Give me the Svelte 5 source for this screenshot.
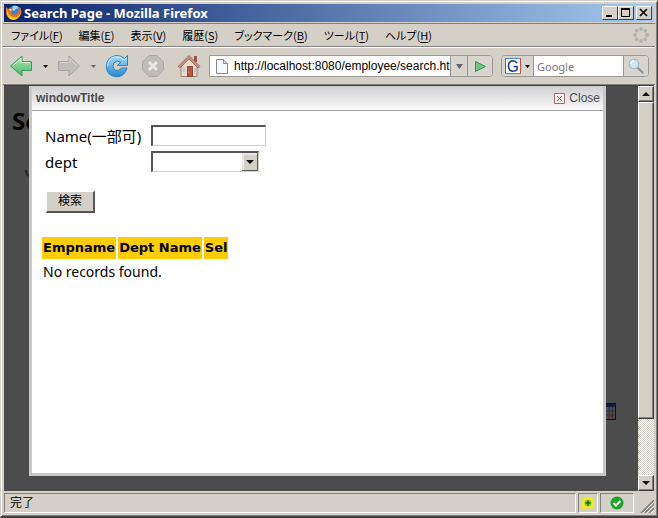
<script>
  const menus = [
    ['ファイル', 'F'],
    ['編集', 'E'],
    ['表示', 'V'],
    ['履歴', 'S'],
    ['ブックマーク', 'B'],
    ['ツール', 'T'],
    ['ヘルプ', 'H']
  ];
  const columns = ['Empname', 'Dept Name', 'Sel'];
  const dots = [0, 45, 90, 135, 180, 225, 270, 315];
  let url = $state('http://localhost:8080/employee/search.ht');
  let query = $state('');
  let name = $state('');
</script>

<div class="window">
  <header class="titlebar">
    <svg class="fox" width="18" height="18" viewBox="0 0 18 18" aria-hidden="true">
      <circle cx="9.5" cy="8" r="6.5" fill="#3a7fd0" />
      <path d="M8 2q4-1 6 2l-3 1-2 2-2-1z" fill="#9fd4f5" />
      <path d="M1 3l2 2 3-1 2 2-2 2 1 2 3 1 3-2 1-4 1-2q3 5 0 9-4 5-9 3-5-2-5-7z" fill="#e8751a" />
      <path d="M2 5q1 7 6 8 5 1 8-4-2 6-7 7-6 0-7-6z" fill="#f9c51f" />
      <path d="M4 5l2 0 1 1-2 1z" fill="#ffe08a" />
    </svg>
    <h1>Search Page - Mozilla Firefox</h1>
    <div class="winbtns">
      <button class="cap" aria-label="Minimize"><svg width="14" height="12"><path d="M3 8h6v2H3z" /></svg></button>
      <button class="cap" aria-label="Maximize"><svg width="14" height="12"><path d="M2 1h9v9H2zM3 3v6h7V3z" fill-rule="evenodd" /></svg></button>
      <button class="cap close" aria-label="Close window"><svg width="14" height="12"><path d="M3 2l7 7M10 2l-7 7" stroke="#000" stroke-width="1.7" /></svg></button>
    </div>
  </header>

  <nav class="menubar">
    {#each menus as [label, key]}
      <button>{label}(<u>{key}</u>)</button>
    {/each}
    <svg class="throbber" width="18" height="18" viewBox="-9 -9 18 18" aria-hidden="true">
      {#each dots as a}
        <circle cx="0" cy="-6" r="1.9" fill="#b4b2ad" transform={`rotate(${a})`} />
      {/each}
    </svg>
  </nav>

  <div class="toolbar">
    <button class="tool back" aria-label="Back">
      <svg width="24" height="24" viewBox="0 0 24 24">
        <defs><linearGradient id="gr" x2="0" y2="1"><stop stop-color="#b5ecb4" /><stop offset="1" stop-color="#45b36a" /></linearGradient></defs>
        <path d="M1.500 12L13 2v5.500h9.500v9H13V22z" fill="url(#gr)" stroke="#3a9a55" stroke-linejoin="round" />
        <path d="M4 11.500L12 4.500v4h9" fill="none" stroke="#d9f7d5" />
      </svg>
    </button>
    <button class="drop" aria-label="Back history"><svg width="5" height="3"><path d="M0 0h5L2.500 3z" /></svg></button>
    <button class="tool forward" aria-label="Forward">
      <svg width="24" height="24" viewBox="0 0 24 24">
        <path d="M22.500 12L12 2v5.500H1.500v9H12V22z" fill="#bfbebb" stroke="#a5a4a1" stroke-linejoin="round" />
        <path d="M20 11.500L13 4.500v4H3" fill="none" stroke="#d6d5d2" />
      </svg>
    </button>
    <button class="drop dim" aria-label="Forward history"><svg width="5" height="3"><path d="M0 0h5L2.500 3z" /></svg></button>
    <button class="tool reload" aria-label="Reload">
      <svg width="24" height="24" viewBox="0 0 24 24">
        <defs><linearGradient id="bl" x2="0" y2="1"><stop stop-color="#a9defa" /><stop offset="1" stop-color="#2386cf" /></linearGradient></defs>
        <path d="M22.500 1.500v10h-10l3.300-3.300Q12 5.500 9 8.800 6.800 12.500 9.300 15.500q3.500 2.700 7.200-1.500h5.700Q19.500 22.800 11.500 22.800 2 22 1.300 13 1.500 3 11 1.500q5-.4 8.500 3z" fill="url(#bl)" stroke="#2f82c0" stroke-linejoin="round" />
        <path d="M2.500 12Q3.500 3 11 2.700q4.500-.3 8.300 3.500l2-2" fill="none" stroke="#cfeefd" />
      </svg>
    </button>
    <button class="tool stop" aria-label="Stop">
      <svg width="24" height="24" viewBox="0 0 24 24">
        <path d="M8 1.500h8L22.500 8v8L16 22.500H8L1.500 16V8z" fill="#bdbcb9" stroke="#a9a8a5" stroke-linejoin="round" />
        <path d="M8 8l8 8M16 8l-8 8" stroke="#e9e8e5" stroke-width="3" />
      </svg>
    </button>
    <button class="tool home" aria-label="Home">
      <svg width="24" height="24" viewBox="0 0 24 24">
        <path d="M17 2h3v6h-3z" fill="#9b5545" />
        <path d="M4 11l8-8 8 8v11.500H4z" fill="#eddcc9" stroke="#a88474" />
        <path d="M1 12.500L12 1.500l11 11-2 1.500-9-9-9 9z" fill="#c58d79" stroke="#94604f" stroke-width=".7" />
        <path d="M10.500 12.500h5v10h-5z" fill="#b95547" stroke="#8a4338" />
        <path d="M5.500 14h3v4h-3zM17 14h2v4h-2z" fill="#b9cddb" />
        <path d="M11 18h1" stroke="#f4d060" />
      </svg>
    </button>
    <form class="address" onsubmit={(e) => e.preventDefault()}>
      <svg class="page" width="12" height="15" viewBox="0 0 12 15" aria-hidden="true">
        <path d="M.5.500h7l4 4v10H.5z" fill="#f6f8fa" stroke="#7e8791" /><path d="M7.500.500v4h4" fill="#d5dae0" stroke="#7e8791" />
      </svg>
      <input aria-label="Address" bind:value={url} />
      <button type="button" class="seg pick" aria-label="Show history"><svg width="7" height="5"><path d="M0 0h7L3.500 5z" fill="#666" /></svg></button>
      <button class="seg go" aria-label="Go">
        <svg width="13" height="13" viewBox="0 0 13 13"><path d="M1.500 1.500L11.500 6.500l-10 5z" fill="#6cc583" stroke="#2f9850" stroke-linejoin="round" /></svg>
      </button>
    </form>
    <form class="search" onsubmit={(e) => e.preventDefault()}>
      <button type="button" class="engine" aria-label="Search engine">
        <svg width="16" height="16" viewBox="0 0 16 16">
          <path d="M0 0h16v16H0z" fill="#fff" />
          <path d="M0 .500h16" stroke="#4c86dc" /><path d="M.5 0v16" stroke="#3f6fce" />
          <path d="M15.500 0v16" stroke="#d94a4a" /><path d="M0 15.500h16" stroke="#3fae58" />
          <path d="M12 5.200Q10.500 2.700 8 2.700 3.500 3 3.500 8t4.500 5.200q2.500 0 4-1.500V8.500H8.500" fill="none" stroke="#1b3fa5" stroke-width="1.600" />
        </svg>
        <svg width="5" height="3"><path d="M0 0h5L2.500 3z" /></svg>
      </button>
      <input aria-label="Search the web" placeholder="Google" bind:value={query} />
      <button class="seg go" aria-label="Search">
        <svg width="16" height="16" viewBox="0 0 16 16">
          <path d="M9 9l5.500 5.500" stroke="#8d9299" stroke-width="2.200" stroke-linecap="round" />
          <circle cx="6" cy="6" r="4.800" fill="#cde4f3" stroke="#a3b0bb" /><path d="M3 6q0-3 3-3" fill="none" stroke="#fff" stroke-width="1.400" />
        </svg>
      </button>
    </form>
  </div>

  <div class="viewport">
    <main class="shade">
      <h2 class="behind">Se</h2>
      <svg class="mark" width="8" height="10" aria-hidden="true"><path d="M5 0q0 4 3 6" fill="none" stroke="#222" stroke-width="2" /></svg>
      <svg class="calendar" width="16" height="17" viewBox="0 0 16 17" aria-hidden="true">
        <path d="M0 0h16v17H0z" fill="#10131c" /><path d="M1 4h14v12H1z" fill="#4c4c4c" />
        <path d="M1 1h14v3H1z" fill="#101b3b" /><path d="M1 8h14M1 12h14M5 4v12M9 4v12M12.500 4v12" stroke="#2a2f3c" />
        <path d="M9 11h3v3H9z" fill="#7b2418" />
      </svg>
      <section class="dialog" aria-label="windowTitle">
        <div class="dlgbar">
          <h3>windowTitle</h3>
          <a href="#close">
            <svg width="11" height="11" viewBox="0 0 11 11" aria-hidden="true"><path d="M.5.500h10v10H.5z" fill="#fdf1f1" stroke="#a86a6a" /><path d="M3 3l5 5M8 3l-5 5" stroke="#c64545" /></svg>
            Close
          </a>
        </div>
        <div class="content">
          <form onsubmit={(e) => e.preventDefault()}>
            <div class="fields">
              <label for="name">Name(一部可)</label>
              <input id="name" bind:value={name} />
              <label for="dept">dept</label>
              <span class="pickbox">
                <select id="dept"><option></option></select>
                <svg width="16" height="18" aria-hidden="true"><path d="M0 0h16v18H0z" fill="#d4d0c8" /><path d="M1 17V1h14" fill="none" stroke="#fff" /><path d="M0 17.500h15.500V0" fill="none" stroke="#555" /><path d="M4 7h8l-4 4z" /></svg>
              </span>
            </div>
            <button class="submit">検索</button>
          </form>
          <table>
            <thead><tr>{#each columns as c}<th>{c}</th>{/each}</tr></thead>
            <tbody><tr><td colspan="3">No records found.</td></tr></tbody>
          </table>
        </div>
      </section>
    </main>
    <div class="scroll">
      <button aria-label="Scroll up"><svg width="8" height="4"><path d="M0 4h8L4 0z" /></svg></button>
      <div class="track"><div class="thumb"></div></div>
      <button aria-label="Scroll down"><svg width="8" height="4"><path d="M0 0h8L4 4z" /></svg></button>
    </div>
  </div>

  <footer class="status">
    <div class="pane message">完了</div>
    <div class="pane addon">
      <svg width="14" height="14" viewBox="0 0 14 14" aria-hidden="true"><path d="M1 2q3 1 5-1 3 1 7 0-1 3 0 6-1 3 0 5-3 1-6 0-3 1-6 1 0-3 0-5 1-3 0-6z" fill="#f2ee16" /><circle cx="7" cy="7" r="3.500" fill="#84c93c" /><path d="M4.500 7h5M7 4.500v5" stroke="#1e5c1e" stroke-width="1.300" /></svg>
    </div>
    <div class="pane check">
      <svg width="14" height="14" viewBox="0 0 14 14" aria-hidden="true"><circle cx="7" cy="7" r="6.500" fill="#18a52c" /><path d="M3.500 7l2.500 2.500L10.500 5" fill="none" stroke="#fff" stroke-width="2" /></svg>
    </div>
    <svg class="grip" width="14" height="14" aria-hidden="true"><path d="M1 14L14 1M5 14l9-9M9 14l5-5" stroke="#808080" stroke-width="1.600" /><path d="M3 14L14 3M7 14l7-7M11 14l3-3" stroke="#fff" /></svg>
  </footer>
</div>

<style>
  :global(body) { margin: 0; }
  .window {
    box-sizing: border-box;
    min-height: 100vh;
    display: flex;
    flex-direction: column;
    padding: 2px;
    border: 1px solid #d4d0c8;
    border-right-color: #404040;
    border-bottom: 2px solid #404040;
    box-shadow: inset 1px 1px #fff, inset -1px -1px #808080;
    background: #d4d0c8;
    font: 12px/16px "Noto Sans", "Noto Sans CJK JP", sans-serif;
    color: #000;
  }
  button, input, select { font: inherit; color: inherit; box-sizing: border-box; margin: 0; padding: 0; border-radius: 0; }
  button { border: 0; background: none; }
  input:focus { outline: none; }
  h1, h2, h3 { margin: 0; }

  .titlebar {
    display: flex;
    align-items: center;
    height: 18px;
    margin: 1px;
    padding: 0 2px 0 1px;
    background: linear-gradient(90deg, #0a246a, #a6caf0);
  }
  .titlebar h1 { flex: 1; padding-left: 1px; font: bold 13px/18px "Noto Sans", "Noto Sans CJK JP", sans-serif; color: #fff; white-space: nowrap; }
  .winbtns { display: flex; }
  .cap {
    display: flex;
    width: 16px;
    height: 14px;
    background: #d4d0c8;
    border: 1px solid #fff;
    border-right-color: #404040;
    border-bottom-color: #404040;
  }
  .cap.close { margin-left: 2px; }

  .menubar {
    display: flex;
    align-items: center;
    gap: 16px;
    height: 22px;
    padding: 0 5px 0 8px;
    border-top: 1px solid #808080;
    border-bottom: 1px solid #808080;
    font-family: "Noto Sans CJK JP", sans-serif;
    font-size: 11px;
    font-feature-settings: "palt";
  }
  .menubar button { white-space: nowrap; line-height: 18px; }
  .menubar u { text-underline-offset: 2px; }
  .throbber { margin-left: auto; }

  .toolbar {
    display: flex;
    align-items: center;
    height: 36px;
    padding: 0 6px;
    border-top: 1px solid #fff;
    border-bottom: 1px solid #808080;
  }
  .tool, .drop { display: flex; flex: none; }
  .drop { width: 24px; height: 24px; align-items: center; justify-content: center; }
  .stop, .home { margin-left: 12px; }
  .drop.dim { opacity: .5; }
  .address, .search {
    display: flex;
    align-items: center;
    height: 22px;
    box-sizing: border-box;
    border: 1px solid #9a9894;
    border-radius: 0 4px 4px 0;
    background: #fff;
    overflow: hidden;
  }
  .address { flex: 1; min-width: 0; margin: 0 8px; }
  .search { flex: none; width: 148px; border-radius: 4px; }
  .page { flex: none; margin: 0 6px; }
  .address input, .search input { flex: 1; min-width: 0; width: 0; height: 20px; border: 0; background: #fff; }
  .address input { font-family: "Liberation Sans", sans-serif; }
  .search input { padding-left: 3px; font-size: 11px; }
  .search input::placeholder { color: #777; opacity: 1; }
  .seg { display: flex; flex: none; align-items: center; justify-content: center; height: 20px; background: #d8d5ce; border-left: 1px solid #9a9894; }
  .pick { width: 17px; }
  .go { width: 25px; }
  .engine { display: flex; align-items: center; gap: 4px; flex: none; height: 20px; padding: 0 3px; background: #d8d5ce; border-right: 1px solid #9a9894; }

  .viewport { flex: 1; display: flex; margin: 0 1px; border-top: 1px solid #404040; }
  .shade { position: relative; flex: 1; min-width: 0; display: flex; padding: 0 32px 15px 25px; background: #4c4c4c; overflow: hidden; }
  .behind { position: absolute; left: 8px; top: 20px; font: bold 24px/30px "Noto Sans", sans-serif; color: #000; }
  .mark { position: absolute; left: 17px; top: 84px; }
  .calendar { position: absolute; right: 22px; bottom: 71px; }
  .dialog {
    position: relative;
    flex: 1;
    min-width: 0;
    box-sizing: border-box;
    background: #fff;
    border: 3px solid #c8c8c8;
    border-top: 0;
  }
  .dlgbar {
    display: flex;
    align-items: center;
    justify-content: space-between;
    height: 24px;
    padding: 0 3px 0 4px;
    border-bottom: 1px solid #a0a0a0;
    background: linear-gradient(#cfcfcf, #fafafa);
    font: 12px/24px "Liberation Sans", sans-serif;
    color: #4a4a4a;
  }
  .dlgbar h3 { font-size: 12px; }
  .dlgbar a { display: flex; align-items: center; gap: 4px; color: inherit; text-decoration: none; }
  .content { padding: 12px 10px 0; font: 14px/20px "Noto Sans", "Noto Sans CJK JP", sans-serif; }
  .fields { display: grid; grid-template-columns: 106px 1fr; align-items: center; justify-items: start; row-gap: 5px; padding-left: 3px; margin: 2px 0 18px; }
  .fields label { white-space: nowrap; font-size: 15px; }
  .fields input, .pickbox { box-sizing: border-box; height: 21px; background: #fff; border: 2px solid #555; border-right: 1px solid #d4d0c8; border-bottom: 1px solid #d4d0c8; }
  .fields input { width: 115px; }
  .pickbox { position: relative; display: flex; width: 108px; }
  .pickbox select { width: 100%; appearance: none; border: 0; background: #fff; outline: none; }
  .pickbox svg { position: absolute; right: 0; top: 0; pointer-events: none; }
  .submit {
    width: 49px;
    height: 22px;
    margin-left: 4px;
    font-size: 12px;
    line-height: 18px;
    background: #d4d0c8;
    border: 1px solid #fff;
    border-right: 2px solid #555;
    border-bottom: 2px solid #555;
  }
  table { margin-top: 22px; border-spacing: 2px; margin-left: -2px; }
  th { height: 22px; padding: 0 1px; background: #fc0; font-family: "DejaVu Sans", sans-serif; font-size: 13px; font-weight: bold; text-align: left; white-space: nowrap; }
  td { height: 22px; padding: 0 1px; }
  th, td { line-height: 22px; }

  .scroll { display: flex; flex-direction: column; flex: none; width: 16px; }
  .scroll button, .thumb {
    box-sizing: border-box;
    background: #d4d0c8;
    border: 1px solid #fff;
    border-right-color: #404040;
    border-bottom-color: #404040;
    box-shadow: inset -1px -1px #808080;
  }
  .scroll button { display: flex; align-items: center; justify-content: center; flex: none; height: 16px; }
  .track { flex: 1; background: repeating-conic-gradient(#fff 0 25%, #d4d0c8 0 50%) 0 0 / 2px 2px; }
  .thumb { height: 85%; }

  .status { display: flex; gap: 2px; height: 20px; padding: 2px 1px 1px; }
  .pane { display: flex; align-items: center; justify-content: center; border: 1px solid #808080; border-right-color: #fff; border-bottom-color: #fff; }
  .message { flex: 1; justify-content: flex-start; padding-left: 5px; }
  .addon { width: 18px; }
  .check { width: 32px; }
  .grip { align-self: flex-end; margin-left: 4px; }
</style>
